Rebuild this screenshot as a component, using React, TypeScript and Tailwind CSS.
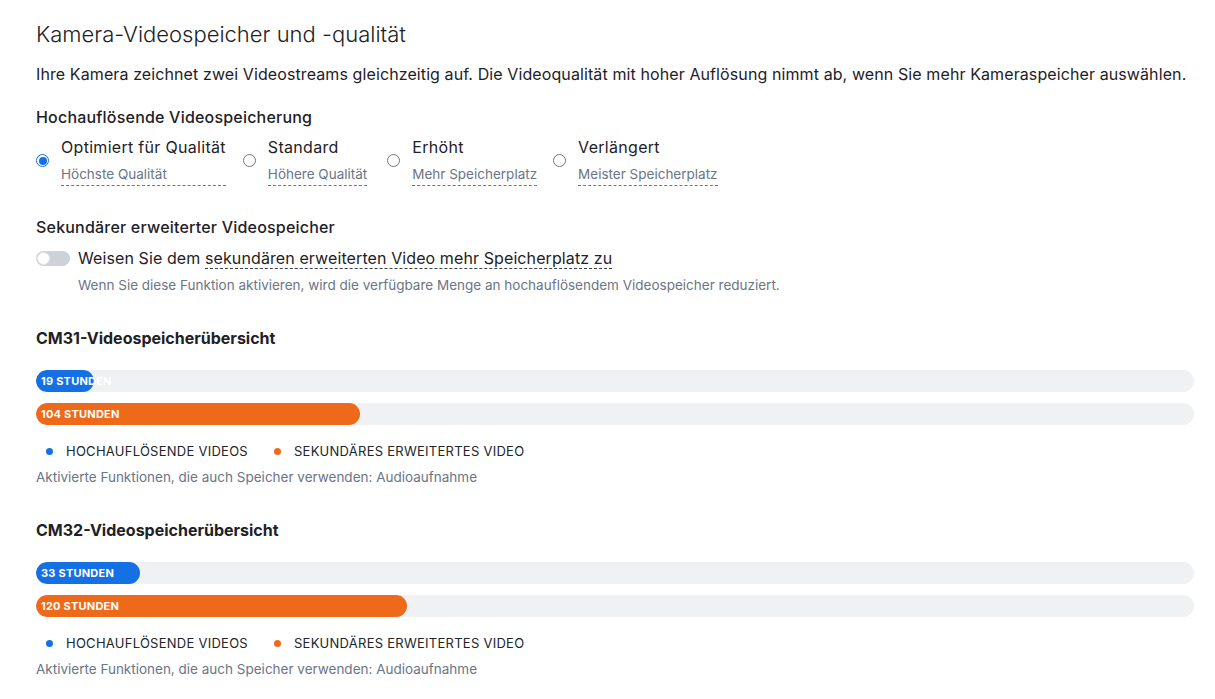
import React from 'react';

const options = [
  { label: 'Optimiert für Qualität', sub: 'Höchste Qualität', checked: true, gap: '' },
  { label: 'Standard', sub: 'Höhere Qualität', checked: false, gap: 'ml-[17px]' },
  { label: 'Erhöht', sub: 'Mehr Speicherplatz', checked: false, gap: 'ml-[20px]' },
  { label: 'Verlängert', sub: 'Meister Speicherplatz', checked: false, gap: 'ml-[16px]' },
];

const cameras = [
  { name: 'CM31-Videospeicherübersicht', hd: 19, hdWidth: 58, sec: 104, secWidth: 324 },
  { name: 'CM32-Videospeicherübersicht', hd: 33, hdWidth: 104, sec: 120, secWidth: 371 },
];

const Bar = ({ width, label, color }: { width: number; label: string; color: string }) => (
  <div className="relative h-[22px] w-full rounded-full bg-[#f0f1f3] overflow-hidden">
    <div className={`h-full rounded-full ${color}`} style={{ width }} />
    <span className="absolute left-[5px] top-0 h-full flex items-center text-[11px] font-bold tracking-[0.02em] text-white whitespace-nowrap">
      {label}
    </span>
  </div>
);

const Summary = ({ cam }: { cam: (typeof cameras)[number] }) => (
  <section className="mt-[32px]">
    <h3 className="text-[16px] font-bold text-[#1e2126] leading-[22px]">{cam.name}</h3>
    <div className="mt-[21px] space-y-[11px]">
      <Bar width={cam.hdWidth} label={`${cam.hd} STUNDEN`} color="bg-[#1570e4]" />
      <Bar width={cam.secWidth} label={`${cam.sec} STUNDEN`} color="bg-[#ee6a1a]" />
    </div>
    <div className="mt-[16px] flex items-center text-[13px] text-[#22252a] tracking-[0.02em] leading-[20px]">
      <span className="ml-[10px] w-[7px] h-[7px] rounded-full bg-[#1570e4]" />
      <span className="ml-[13px]">HOCHAUFLÖSENDE VIDEOS</span>
      <span className="ml-[26px] w-[7px] h-[7px] rounded-full bg-[#ee6a1a]" />
      <span className="ml-[13px]">SEKUNDÄRES ERWEITERTES VIDEO</span>
    </div>
    <p className="mt-[6px] text-[13.5px] text-[#6b7585] leading-[20px]">
      Aktivierte Funktionen, die auch Speicher verwenden: Audioaufnahme
    </p>
  </section>
);

export default function App() {
  return (
    <div className="min-h-screen bg-white px-[36px] pt-[19px] text-[#1e2126]" style={{ fontFamily: 'Inter, "Noto Sans", sans-serif' }}>
      <h1 className="text-[22px] font-light leading-[30px]">Kamera-Videospeicher und -qualität</h1>
      <p className="mt-[13px] text-[16px] leading-[24px] tracking-[0.1px] whitespace-nowrap">
        Ihre Kamera zeichnet zwei Videostreams gleichzeitig auf. Die Videoqualität mit hoher Auflösung nimmt ab, wenn Sie mehr Kameraspeicher auswählen.
      </p>

      <h2 className="mt-[19px] text-[16px] font-medium leading-[24px] tracking-[0.2px]">Hochauflösende Videospeicherung</h2>
      <div className="mt-[6px] flex items-center">
        {options.map((o, i) => (
          <div key={i} className={`flex items-center ${o.gap}`}>
            <span
              className={`w-[13px] h-[13px] rounded-full flex items-center justify-center ${
                o.checked ? 'border-[1.5px] border-[#1570e4]' : 'border border-[#767676]'
              }`}
            >
              {o.checked && <span className="w-[8px] h-[8px] rounded-full bg-[#1570e4]" />}
            </span>
            <div className="ml-[12px] flex flex-col">
              <span className="text-[16px] leading-[24px] tracking-[0.3px]">{o.label}</span>
              <span className="mt-[5px] text-[13.5px] leading-[20px] text-[#6b7585] border-b border-dashed border-[#6b7585] pb-[1px]">
                {o.sub}
              </span>
            </div>
          </div>
        ))}
      </div>

      <h2 className="mt-[29px] text-[16px] font-medium leading-[24px] tracking-[0.2px]">Sekundärer erweiterter Videospeicher</h2>
      <div className="mt-[7px] flex items-center">
        <span className="relative w-[34px] h-[15px] rounded-full bg-[#cdd2d9]">
          <span className="absolute left-[1px] top-[1px] w-[13px] h-[13px] rounded-full bg-white border border-[#e2e5ea]" />
        </span>
        <span className="ml-[8px] text-[16px] leading-[24px] tracking-[0.1px]">
          Weisen Sie dem{' '}
          <span className="border-b border-dashed border-[#3b4048]">sekundären erweiterten Video mehr Speicherplatz zu</span>
        </span>
      </div>
      <p className="mt-[5px] ml-[42px] text-[13.5px] leading-[20px] text-[#6b7585]">
        Wenn Sie diese Funktion aktivieren, wird die verfügbare Menge an hochauflösendem Videospeicher reduziert.
      </p>

      <div className="w-[1158px]">
        {cameras.map((c) => (
          <Summary key={c.name} cam={c} />
        ))}
      </div>
    </div>
  );
}
